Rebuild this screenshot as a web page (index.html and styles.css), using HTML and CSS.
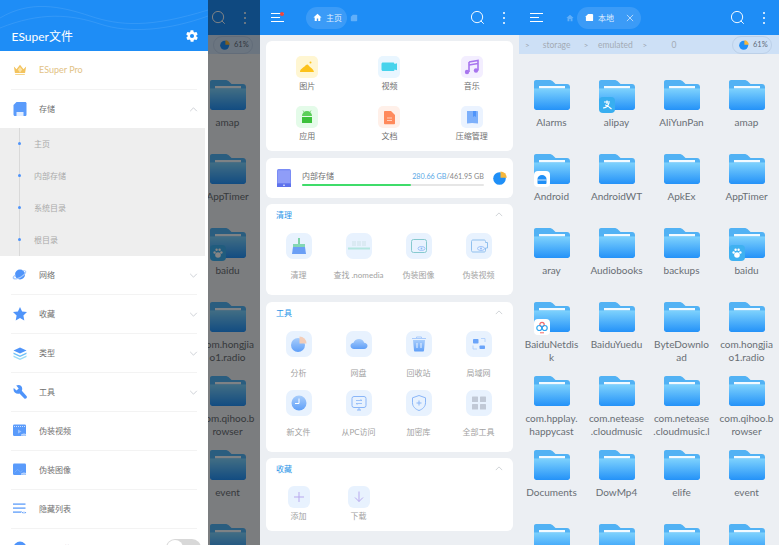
FILE: index.html
```html
<!DOCTYPE html>
<html lang="zh">
<head>
<meta charset="utf-8">
<title>ESuper文件</title>
<link rel="stylesheet" href="styles.css">
</head>
<body>
<svg class="defs" width="0" height="0" aria-hidden="true">
  <defs>
    <linearGradient id="fg" x1="0" y1="0" x2="0" y2="1"><stop offset="0" stop-color="#7ed2fd"/><stop offset="1" stop-color="#2492f8"/></linearGradient>
    <linearGradient id="tg" x1="0" y1="0" x2="0" y2="1"><stop offset="0" stop-color="#a8cdfb"/><stop offset="1" stop-color="#5f9ff8"/></linearGradient>
    <symbol id="folder" viewBox="0 0 36 30">
      <path d="M2 0h13c2 0 3 .6 4.500 2L21.500 4H33c1.700 0 3 1.300 3 3v8H0V2c0-1.100.9-2 2-2z" fill="#52b2f4"/>
      <rect x="5" y="6" width="26" height="2.500" fill="#f2faff"/>
      <path d="M0 8.500h36v19C36 28.900 34.900 30 33.500 30h-31C1.100 30 0 28.900 0 27.500z" fill="url(#fg)"/>
    </symbol>
    <symbol id="pie" viewBox="0 0 14 14">
      <circle cx="6.500" cy="7.500" r="6.300" fill="#1f8ff7"/>
      <path d="M7.500 0.500a6.300 6.300 0 0 1 6.300 6.300H7.500z" fill="#f6b73c"/>
    </symbol>
    <symbol id="search" viewBox="0 0 16 16">
      <circle cx="7.500" cy="7.500" r="6" fill="none" stroke="#fff" stroke-width="1"/>
      <path d="M11.800 11.800l2.600 2.600" stroke="#fff" stroke-width="1" stroke-linecap="round"/>
    </symbol>
    <symbol id="sd" viewBox="0 0 10 10">
      <path d="M3.500 1H8c.6 0 1 .4 1 1v6c0 .6-.4 1-1 1H2c-.6 0-1-.4-1-1V3.500z" fill="currentColor"/>
    </symbol>
    <symbol id="chev" viewBox="0 0 10 6"><path d="M1 5l4-4 4 4" fill="none" stroke="#bfc3c9" stroke-width=".9"/></symbol>
    <symbol id="chevd" viewBox="0 0 10 6"><path d="M1 1l4 4 4-4" fill="none" stroke="#bfc3c9" stroke-width=".9"/></symbol>
    <symbol id="eye" viewBox="0 0 8 5"><path d="M0 2.500C1.500.3 6.500.3 8 2.500 6.500 4.700 1.500 4.700 0 2.500z" fill="#fff"/><path d="M1 2.500C2.300 1 5.700 1 7 2.500 5.700 4 2.300 4 1 2.500z" fill="#4f94fa"/><circle cx="4" cy="2.500" r=".9" fill="#fff"/></symbol>
  </defs>
</svg>

<main class="screens">

  <!-- Screen 1: dimmed browser with open drawer -->
  <section class="screen">
    <header class="appbar">
      <span class="grow"></span>
      <svg class="ic-search"><use href="#search"/></svg>
      <span class="kebab"><i></i><i></i><i></i></span>
    </header>
    <div class="pathbar">
      <span class="grow"></span>
      <span class="usage"><svg class="usage-pie"><use href="#pie"/></svg>61%</span>
    </div>
    <div class="files files-last">
      <div class="file"><svg class="folder"><use href="#folder"/></svg><p>amap</p></div>
      <div class="file"><svg class="folder"><use href="#folder"/></svg><p>AppTimer</p></div>
      <div class="file"><svg class="folder"><use href="#folder"/></svg><span class="badge badge-baidu"><svg viewBox="0 0 16 16"><circle cx="8" cy="10" r="2.800" fill="#fff"/><circle cx="4.600" cy="7.500" r="1.200" fill="#fff"/><circle cx="11.400" cy="7.500" r="1.200" fill="#fff"/><circle cx="6.600" cy="4.800" r="1.200" fill="#fff"/><circle cx="9.600" cy="4.800" r="1.200" fill="#fff"/></svg></span><p>baidu</p></div>
      <div class="file"><svg class="folder"><use href="#folder"/></svg><p>com.hongjia<br>o1.radio</p></div>
      <div class="file"><svg class="folder"><use href="#folder"/></svg><p>com.qihoo.b<br>rowser</p></div>
      <div class="file"><svg class="folder"><use href="#folder"/></svg><p>event</p></div>
      <div class="file"><svg class="folder"><use href="#folder"/></svg></div>
    </div>
    <div class="scrim"></div>
    <aside class="drawer">
      <div class="drawer-head">
        <svg class="waves" viewBox="0 0 208 51" preserveAspectRatio="none"><path d="M0 18C30 0 60 6 90 16s60 12 118-6M0 28C40 12 70 14 100 24s70 6 108-8" fill="none" stroke="#fff" stroke-opacity=".14" stroke-width=".7"/></svg>
        <span class="drawer-title">ESuper文件</span>
        <svg class="gear" viewBox="0 0 24 24"><path fill="#fff" d="M19.400 13a7.500 7.500 0 0 0 0-2l2.100-1.600a.5.500 0 0 0 .1-.6l-2-3.500a.5.500 0 0 0-.6-.2l-2.500 1a7.300 7.300 0 0 0-1.700-1l-.4-2.700a.5.500 0 0 0-.5-.4h-4a.5.500 0 0 0-.5.400l-.4 2.700a7.300 7.300 0 0 0-1.700 1l-2.500-1a.5.500 0 0 0-.6.200l-2 3.500a.5.500 0 0 0 .1.600L4.600 11a7.500 7.500 0 0 0 0 2l-2.100 1.600a.5.500 0 0 0-.1.600l2 3.500c.1.200.4.300.6.200l2.500-1c.5.400 1.100.7 1.700 1l.4 2.700c0 .2.200.4.500.4h4c.3 0 .5-.2.500-.4l.4-2.700c.6-.3 1.200-.6 1.700-1l2.500 1c.2.100.5 0 .6-.2l2-3.500a.5.500 0 0 0-.1-.6zM12 15.500a3.500 3.500 0 1 1 0-7 3.500 3.500 0 0 1 0 7z"/></svg>
      </div>
      <div class="row row-pro">
        <svg class="row-ic" viewBox="0 0 16 14"><path d="M1 3l3 3 4-5 4 5 3-3-1.200 7.500H2.200z" fill="#f3c35e"/><path d="M8 3.500l2.500 3L8 10 5.500 6.500z" fill="#fbe3a8"/><rect x="2.500" y="11.500" width="11" height="1.200" fill="#f6d68c"/></svg>
        <span class="pro-label">ESuper Pro</span>
      </div>
      <div class="row">
        <svg class="row-ic" viewBox="0 0 14 14"><path d="M3.500 0H12c1 0 1.500.6 1.500 1.500v11c0 1-.6 1.500-1.500 1.500H2c-1 0-1.500-.6-1.500-1.500V3z" fill="#5a9bfb"/><rect x="3.500" y="10" width="7" height="4" fill="#e3eeff"/></svg>
        <span>存储</span><svg class="row-chev"><use href="#chev"/></svg>
      </div>
      <ul class="tree">
        <li>主页</li>
        <li>内部存储</li>
        <li>系统目录</li>
        <li>根目录</li>
      </ul>
      <div class="row">
        <svg class="row-ic row-ic-wide" viewBox="0 0 16 14"><circle cx="8" cy="6.500" r="5" fill="#4f94fa"/><path d="M.8 10.500c-.8-1.400 1-3 2.700-4.200.1.400.1.700.3 1-1.200.9-1.900 1.800-1.600 2.400.6 1 3.500.4 6.500-1.300s5-3.800 4.400-4.800c-.3-.5-1-.6-2-.4-.3-.2-.6-.5-1-.7 1.900-.5 3.400-.4 4 .6.900 1.600-1.500 4.500-5.300 6.700S1.700 12.100.8 10.500z" fill="#a9cbfc"/></svg>
        <span>网络</span><svg class="row-chev"><use href="#chevd"/></svg>
      </div>
      <div class="row">
        <svg class="row-ic" viewBox="0 0 14 14"><path d="M7 0l2.100 4.500 4.900.6-3.600 3.400.9 5L7 11.100 2.700 13.500l.9-5L0 5.100l4.900-.6z" fill="#4f94fa"/></svg>
        <span>收藏</span><svg class="row-chev"><use href="#chevd"/></svg>
      </div>
      <div class="row">
        <svg class="row-ic" viewBox="0 0 14 14"><path d="M7 1.500l6.500 3L7 7.500l-6.500-3z" fill="#4f94fa"/><path d="M.5 6.500L7 9.500l6.500-3V8L7 11 .5 8z" fill="#6fc0f7"/><path d="M.5 9.500L7 12.500l6.500-3V11L7 14 .5 11z" fill="#9bdcf6"/></svg>
        <span>类型</span><svg class="row-chev"><use href="#chevd"/></svg>
      </div>
      <div class="row">
        <svg class="row-ic" viewBox="0 0 14 14"><path d="M5.500 0C7.800 0 9.500 1.800 9.200 4.300c0 .7-.2 1.100-.4 1.500l4.700 5.200c.6.700.5 1.700-.1 2.300-.7.600-1.700.6-2.300-.1L6.500 8.500C3.500 9.300.5 7.500.5 4.500c0-.6.100-1 .3-1.500l2.700 2.600 2.200-2.200L3.200.6C3.900.2 4.700 0 5.500 0z" fill="#4f94fa"/></svg>
        <span>工具</span><svg class="row-chev"><use href="#chevd"/></svg>
      </div>
      <div class="row">
        <svg class="row-ic" viewBox="0 0 14 13"><rect y="0" width="13" height="11.500" rx="1.200" fill="#5a9bfb"/><path d="M1 2h1M3 2h1M5 2h1M7 2h1M9 2h1M11 2h1" stroke="#fff" stroke-width=".7"/><path d="M5 5l3.500 2L5 9z" fill="#9cc2fc"/><use href="#eye" x="8" y="8.500" width="6" height="4"/></svg>
        <span>伪装视频</span>
      </div>
      <div class="row">
        <svg class="row-ic" viewBox="0 0 14 13"><rect y="0" width="13" height="11.500" rx="1.200" fill="#5a9bfb"/><path d="M1.500 9l3-3 3 2.500 2-1.500" fill="none" stroke="#81b2fb" stroke-width=".7"/><use href="#eye" x="8" y="8.500" width="6" height="4"/></svg>
        <span>伪装图像</span>
      </div>
      <div class="row">
        <svg class="row-ic" viewBox="0 0 14 13"><rect y="1" width="12.500" height="1.200" fill="#4f94fa"/><rect y="5" width="12.500" height="1.200" fill="#4f94fa"/><rect y="9" width="9" height="1.200" fill="#4f94fa"/><use href="#eye" x="8" y="8" width="6" height="4"/></svg>
        <span>隐藏列表</span>
      </div>
      <div class="row row-last">
        <svg class="row-ic" viewBox="0 0 14 14"><circle cx="7" cy="7" r="6.500" fill="#4f94fa"/></svg>
        <span class="last-label">显示隐藏路径</span>
        <span class="toggle"><i></i></span>
      </div>
    </aside>
  </section>

  <!-- Screen 2: home -->
  <section class="screen screen-home">
    <header class="appbar">
      <span class="burger burger-dot"><i></i><i></i><i></i></span>
      <span class="tab tab-home">
        <svg class="tab-ic" viewBox="0 0 10 10"><path d="M5 .8L.5 5h1.400v4h2.300V6.200h1.600V9h2.300V5h1.400z" fill="#fff"/></svg>主页
      </span>
      <svg class="crumb-ic crumb-sd"><use href="#sd"/></svg>
      <span class="grow"></span>
      <svg class="ic-search"><use href="#search"/></svg>
      <span class="kebab"><i></i><i></i><i></i></span>
    </header>
    <div class="home">
      <div class="card cats">
        <div class="cat"><span class="cat-ic bg-yellow"><svg viewBox="0 0 22 22"><path d="M4 16c0-3 3-4 5-6 2-2 3-2 4 0 1.500 1.500 4.500 3 5 6z" fill="#fcc21b"/><circle cx="14.500" cy="6.500" r="1" fill="#fcc21b"/></svg></span>图片</div>
        <div class="cat"><span class="cat-ic bg-blue"><svg viewBox="0 0 22 22"><path d="M5 6.500h10c1 0 1.500.6 1.500 1.500l2.500-.7v7l-2.500-.8c0 1-.5 1.500-1.500 1.500H5c-1 0-1.500-.6-1.500-1.500V8C3.500 7.100 4 6.500 5 6.500z" fill="#47d3ec"/></svg></span>视频</div>
        <div class="cat"><span class="cat-ic bg-purple"><svg viewBox="0 0 22 22"><path d="M8 6l9-1.500v10" fill="none" stroke="#a875ee" stroke-width="1.600"/><path d="M8 6v10" stroke="#a875ee" stroke-width="1.600"/><path d="M8 9l9-1.500" stroke="#a875ee" stroke-width="1.600"/><circle cx="6" cy="16" r="2.200" fill="#a875ee"/><circle cx="15" cy="14.500" r="2.200" fill="#a875ee"/></svg></span>音乐</div>
        <div class="cat"><span class="cat-ic bg-green"><svg viewBox="0 0 22 22"><path d="M6 10a5 5 0 0 1 10 0z" fill="#5ccf5a"/><path d="M6 11h10v6H6z" fill="#3cc13b"/><path d="M8 6L7 4.500M14 6l1-1.500" stroke="#5ccf5a" stroke-width=".7"/></svg></span>应用</div>
        <div class="cat"><span class="cat-ic bg-orange"><svg viewBox="0 0 22 22"><path d="M7 5h6l4 4v8.500c0 .5-.4.800-.8.800H6.800c-.4 0-.8-.3-.8-.8V6c0-.5.4-1 1-1z" fill="#ff8a5c"/><path d="M9 12h5M9 14.500h5" stroke="#ffe3d6" stroke-width=".8"/></svg></span>文档</div>
        <div class="cat"><span class="cat-ic bg-sky"><svg viewBox="0 0 22 22"><path d="M6 5h10c.6 0 1 .4 1 1v11.500l-6-.5-5 .5z" fill="#7db0fb"/><path d="M12 5h3v6l-1.500-1-1.500 1z" fill="#4f94fa"/></svg></span>压缩管理</div>
      </div>
      <div class="card storage">
        <svg class="storage-ic" viewBox="0 0 14 18"><rect width="14" height="18" rx="1.500" fill="#7a8cf5"/><rect x="1" y="1.500" width="12" height="12.500" fill="#8f9df8"/><rect y="14.500" width="14" height="3.500" fill="#5e72ec"/><circle cx="7" cy="16.200" r=".8" fill="#fff"/></svg>
        <div class="storage-main">
          <div class="storage-text"><span>内部存储</span><span class="storage-size"><b>280.66 GB</b>/461.95 GB</span></div>
          <div class="bar"><div class="bar-fill"></div></div>
        </div>
        <svg class="storage-pie"><use href="#pie"/></svg>
      </div>
      <div class="card section">
        <div class="section-head"><span>清理</span><svg class="section-chev"><use href="#chev"/></svg></div>
        <div class="tools">
          <div class="tool"><span class="tool-ic"><svg viewBox="0 0 26 26"><path d="M12 5h2v6h-2z" fill="#7ed3a8"/><path d="M7 11h12v3H7z" fill="#83d7b5"/><path d="M7 14h12l1 7H6z" fill="#6b9ff5"/></svg></span>清理</div>
          <div class="tool"><span class="tool-ic"><svg viewBox="0 0 26 26"><rect x="6" y="8" width="4" height="5" fill="#dbeaf3"/><rect x="11" y="8" width="4" height="5" fill="#dbeaf3"/><rect x="16" y="8" width="4" height="5" fill="#dbeaf3"/><rect x="2" y="14.500" width="22" height="2" fill="#b4e6e0"/></svg></span>查找 .nomedia</div>
          <div class="tool"><span class="tool-ic"><svg viewBox="0 0 26 26"><rect x="5.500" y="6.500" width="15" height="13" rx="2" fill="none" stroke="#86c9cf" stroke-width="1"/><ellipse cx="15.500" cy="15.500" rx="3.500" ry="2" fill="none" stroke="#8db8f6" stroke-width=".8"/><circle cx="15.500" cy="15.500" r=".9" fill="#8db8f6"/></svg></span>伪装图像</div>
          <div class="tool"><span class="tool-ic"><svg viewBox="0 0 26 26"><path d="M7 7h11c1 0 1.500.6 1.500 1.500v1h2V15h-2v2.500c0 1-.5 1.500-1.500 1.500H7c-1 0-1.500-.5-1.500-1.500v-9C5.500 7.600 6 7 7 7z" fill="none" stroke="#90c0ee" stroke-width="1"/><ellipse cx="15" cy="15.500" rx="3.500" ry="2" fill="none" stroke="#8db8f6" stroke-width=".8"/><circle cx="15" cy="15.500" r=".9" fill="#8db8f6"/></svg></span>伪装视频</div>
        </div>
      </div>
      <div class="card section">
        <div class="section-head"><span>工具</span><svg class="section-chev"><use href="#chev"/></svg></div>
        <div class="tools">
          <div class="tool"><span class="tool-ic"><svg viewBox="0 0 26 26"><circle cx="12" cy="14" r="7" fill="url(#tg)"/><path d="M13.500 5.500a7 7 0 0 1 7 7h-7z" fill="#f3cdb8"/></svg></span>分析</div>
          <div class="tool"><span class="tool-ic"><svg viewBox="0 0 26 26"><path d="M8 18c-2 0-3.500-1.400-3.500-3.200S5.800 11.700 7.500 11.700C8.200 9.500 10.400 8 13 8s4.500 1.500 5.200 3.700c1.800 0 3.300 1.300 3.300 3.100S20 18 18 18z" fill="url(#tg)"/></svg></span>网盘</div>
          <div class="tool"><span class="tool-ic"><svg viewBox="0 0 26 26"><path d="M7 9h12l-1 10.500c0 .5-.5 1-1 1H9c-.5 0-1-.5-1-1z" fill="url(#tg)"/><path d="M6 7.500h14M10.500 7.500V6h5v1.500" fill="none" stroke="#a9cbfc" stroke-width="1"/><path d="M11 12v5M15 12v5" stroke="#eaf3ff" stroke-width="1"/></svg></span>回收站</div>
          <div class="tool"><span class="tool-ic"><svg viewBox="0 0 26 26"><rect x="7" y="8" width="5.500" height="4.500" rx=".8" fill="#6aa4fa"/><rect x="13.500" y="14.500" width="5.500" height="3.500" rx=".8" fill="#6aa4fa"/><path d="M15 7.500h4V11M7 14.500V18h4" fill="none" stroke="#a9cbfc" stroke-width=".8"/></svg></span>局域网</div>
          <div class="tool"><span class="tool-ic"><svg viewBox="0 0 26 26"><circle cx="13" cy="13" r="7.500" fill="url(#tg)"/><path d="M13 8.500V13.500H9" fill="none" stroke="#fff" stroke-width="1"/></svg></span>新文件</div>
          <div class="tool"><span class="tool-ic"><svg viewBox="0 0 26 26"><rect x="6" y="6.500" width="14" height="11" rx="2" fill="none" stroke="#8ab6f8" stroke-width="1"/><path d="M10 10.500h6l-1.500-1M16 13.500h-6l1.500 1" fill="none" stroke="#8ab6f8" stroke-width=".8"/><path d="M11 20h4M13 17.500V20" stroke="#8ab6f8" stroke-width="1"/></svg></span>从PC访问</div>
          <div class="tool"><span class="tool-ic"><svg viewBox="0 0 26 26"><path d="M13 5.500l6.500 2.300v5c0 3.700-2.800 6.400-6.500 7.700-3.700-1.300-6.500-4-6.500-7.700v-5z" fill="none" stroke="#8ab6f8" stroke-width="1"/><path d="M13 10.500v5M10.500 13h5" stroke="#8ab6f8" stroke-width="1"/></svg></span>加密库</div>
          <div class="tool"><span class="tool-ic"><svg viewBox="0 0 26 26"><rect x="6" y="6.500" width="6" height="5.500" rx=".6" fill="#c1c9d6"/><rect x="14" y="6.500" width="6" height="5.500" rx=".6" fill="#c1c9d6"/><rect x="6" y="14" width="6" height="5.500" rx=".6" fill="#c1c9d6"/><rect x="14" y="14" width="6" height="5.500" rx=".6" fill="#c1c9d6"/></svg></span>全部工具</div>
        </div>
      </div>
      <div class="card section">
        <div class="section-head"><span>收藏</span><svg class="section-chev"><use href="#chev"/></svg></div>
        <div class="tools tools-fav">
          <div class="tool"><span class="tool-ic"><svg viewBox="0 0 22 22"><path d="M11 6v10M6 11h10" stroke="#b8a9ee" stroke-width="1"/></svg></span>添加</div>
          <div class="tool"><span class="tool-ic"><svg viewBox="0 0 22 22"><path d="M11 5.500v10M7 11.500l4 4 4-4" fill="none" stroke="#b8a9ee" stroke-width="1"/></svg></span>下载</div>
        </div>
      </div>
    </div>
  </section>

  <!-- Screen 3: local file browser -->
  <section class="screen">
    <header class="appbar">
      <span class="burger"><i></i><i></i><i></i></span>
      <svg class="crumb-ic crumb-home" viewBox="0 0 10 10"><path d="M5 .8L.5 5h1.400v4h2.300V6.200h1.600V9h2.300V5h1.400z" fill="currentColor"/></svg>
      <span class="tab tab-local">
        <svg class="tab-ic"><use href="#sd"/></svg>本地
        <svg class="tab-close" viewBox="0 0 9 9"><path d="M1 1l7 7M8 1L1 8" stroke="#fff" stroke-opacity=".85" stroke-width=".8"/></svg>
      </span>
      <span class="grow"></span>
      <svg class="ic-search"><use href="#search"/></svg>
      <span class="kebab"><i></i><i></i><i></i></span>
    </header>
    <div class="pathbar">
      <span class="seg">&gt;<em>storage</em></span>
      <span class="seg">&gt;<em>emulated</em></span>
      <span class="seg">&gt;<em>0</em></span>
      <span class="grow"></span>
      <span class="usage"><svg class="usage-pie"><use href="#pie"/></svg>61%</span>
    </div>
    <div class="files">
      <div class="file"><svg class="folder"><use href="#folder"/></svg><p>Alarms</p></div>
      <div class="file"><svg class="folder"><use href="#folder"/></svg><span class="badge badge-alipay"><svg viewBox="0 0 16 16"><path d="M5 5h6M8 3.500V7M4 11c3 0 5-2 6-5M6 8c2 0 4 2 6.500 4" fill="none" stroke="#fff" stroke-width="1.200"/></svg></span><p>alipay</p></div>
      <div class="file"><svg class="folder"><use href="#folder"/></svg><p>AliYunPan</p></div>
      <div class="file"><svg class="folder"><use href="#folder"/></svg><p>amap</p></div>
      <div class="file"><svg class="folder"><use href="#folder"/></svg><span class="badge badge-white"><svg viewBox="0 0 16 16"><path d="M3.500 8a4.500 4 0 0 1 9 0v4c0 .6-.4 1-1 1h-7c-.6 0-1-.4-1-1z" fill="#1f8ff7"/><path d="M3.500 9h9" stroke="#fff" stroke-width=".8"/></svg></span><p>Android</p></div>
      <div class="file"><svg class="folder"><use href="#folder"/></svg><p>AndroidWT</p></div>
      <div class="file"><svg class="folder"><use href="#folder"/></svg><p>ApkEx</p></div>
      <div class="file"><svg class="folder"><use href="#folder"/></svg><p>AppTimer</p></div>
      <div class="file"><svg class="folder"><use href="#folder"/></svg><p>aray</p></div>
      <div class="file"><svg class="folder"><use href="#folder"/></svg><p>Audiobooks</p></div>
      <div class="file"><svg class="folder"><use href="#folder"/></svg><p>backups</p></div>
      <div class="file"><svg class="folder"><use href="#folder"/></svg><span class="badge badge-baidu"><svg viewBox="0 0 16 16"><circle cx="8" cy="10" r="2.800" fill="#fff"/><circle cx="4.600" cy="7.500" r="1.200" fill="#fff"/><circle cx="11.400" cy="7.500" r="1.200" fill="#fff"/><circle cx="6.600" cy="4.800" r="1.200" fill="#fff"/><circle cx="9.600" cy="4.800" r="1.200" fill="#fff"/></svg></span><p>baidu</p></div>
      <div class="file"><svg class="folder"><use href="#folder"/></svg><span class="badge badge-white"><svg viewBox="0 0 16 16"><circle cx="8" cy="5.500" r="2.200" fill="none" stroke="#ef6a6a" stroke-width="1.200"/><circle cx="5.300" cy="9" r="2.500" fill="none" stroke="#2fa6f2" stroke-width="1.200"/><circle cx="10.700" cy="9" r="2.500" fill="none" stroke="#2fa6f2" stroke-width="1.200"/><path d="M6 13.800h4" stroke="#ef6a6a" stroke-width="1"/></svg></span><p>BaiduNetdis<br>k</p></div>
      <div class="file"><svg class="folder"><use href="#folder"/></svg><p>BaiduYuedu</p></div>
      <div class="file"><svg class="folder"><use href="#folder"/></svg><p>ByteDownlo<br>ad</p></div>
      <div class="file"><svg class="folder"><use href="#folder"/></svg><p>com.hongjia<br>o1.radio</p></div>
      <div class="file"><svg class="folder"><use href="#folder"/></svg><p>com.hpplay.<br>happycast</p></div>
      <div class="file"><svg class="folder"><use href="#folder"/></svg><p>com.netease<br>.cloudmusic</p></div>
      <div class="file"><svg class="folder"><use href="#folder"/></svg><p>com.netease<br>.cloudmusic.l</p></div>
      <div class="file"><svg class="folder"><use href="#folder"/></svg><p>com.qihoo.b<br>rowser</p></div>
      <div class="file"><svg class="folder"><use href="#folder"/></svg><p>Documents</p></div>
      <div class="file"><svg class="folder"><use href="#folder"/></svg><p>DowMp4</p></div>
      <div class="file"><svg class="folder"><use href="#folder"/></svg><p>elife</p></div>
      <div class="file"><svg class="folder"><use href="#folder"/></svg><p>event</p></div>
      <div class="file"><svg class="folder"><use href="#folder"/></svg></div>
      <div class="file"><svg class="folder"><use href="#folder"/></svg></div>
      <div class="file"><svg class="folder"><use href="#folder"/></svg></div>
      <div class="file"><svg class="folder"><use href="#folder"/></svg></div>
    </div>
  </section>
</main>
</body>
</html>
```

FILE: styles.css
```css
* { box-sizing: border-box; }
html, body { margin: 0; padding: 0; }
body {
  width: 779px;
  height: 545px;
  overflow: hidden;
  font-family: "Lato", "Noto Sans CJK SC", sans-serif;
  color: #555;
  background: #eceff3;
}
.defs { position: absolute; }
.screens { display: flex; height: 545px; }
.screen { position: relative; width: 260px; height: 545px; overflow: hidden; background: #eceff3; flex: none; }
.screen-home { width: 259px; }
.grow { flex: 1; }

/* app bar */
.appbar { display: flex; align-items: center; height: 35px; background: #1e8df6; color: #fff; padding-right: 14.500px; }
.ic-search { width: 15px; height: 15px; margin-right: 18px; }
.kebab { display: flex; flex-direction: column; gap: 3px; width: 2px; }
.kebab i { width: 2px; height: 2px; border-radius: 50%; background: #fff; }
.burger { position: relative; display: flex; flex-direction: column; gap: 3.300px; width: 13px; margin-left: 11px; }
.burger i { height: 1px; background: #fff; }
.burger i:nth-child(2) { width: 9px; }
.burger-dot::after { content: ""; position: absolute; left: 9px; top: -1px; width: 4px; height: 4px; border-radius: 50%; background: #f0453a; }
.tab { display: flex; align-items: center; height: 22px; border-radius: 11px; background: rgba(255,255,255,.13); font-size: 8px; color: rgba(255,255,255,.85); }
.tab-ic { width: 9px; height: 9px; color: #fff; }
.tab-home { margin-left: 22px; width: 41px; padding-left: 7px; gap: 4px; }
.crumb-ic { width: 8px; height: 8px; color: rgba(255,255,255,.3); }
.crumb-sd { margin-left: 3px; }
.crumb-home { margin-left: 23px; }
.tab-local { margin-left: 3px; width: 64px; padding-left: 8px; gap: 4px; }
.tab-close { width: 8px; height: 8px; margin-left: 8px; }

/* path bar */
.pathbar { display: flex; align-items: center; height: 19px; background: #cde0f6; padding: 0 7px 0 6px; font-size: 8px; color: #a3abb5; }
.seg { display: flex; align-items: center; width: 58.700px; font-size: 8px; color: #9ba4ae; }
.seg em { flex: 1; font-style: normal; font-size: 8.500px; text-align: center; color: #a3abb5; }
.usage { display: flex; align-items: center; height: 18px; width: 40px; padding-left: 6px; gap: 4px; border: 1px solid #bcd0e8; border-radius: 9px; color: #5f6b7a; font-size: 7.500px; }
.usage-pie { width: 10px; height: 10px; flex: none; }

/* file grid */
.files { display: grid; grid-template-columns: repeat(4, 65px); grid-auto-rows: 74px; padding-top: 26px; }
.files-last .file { grid-column: 4; }
.file { position: relative; display: flex; flex-direction: column; align-items: center; padding: 0 2px; }
.folder { width: 36px; height: 30px; flex: none; }
.file p {
  margin: 5.500px 0 0;
  width: 100%;
  font-size: 10px;
  line-height: 13px;
  color: #686e74;
  text-align: center;
  white-space: nowrap;
}
.badge { position: absolute; left: 14.500px; top: 17px; width: 16px; height: 16px; border-radius: 4px; }
.badge svg { display: block; width: 16px; height: 16px; }
.badge-alipay { background: #38aef0; }
.badge-baidu { background: #3fb1f1; }
.badge-white { background: #fff; }

/* scrim + drawer */
.scrim { position: absolute; inset: 0; background: rgba(0,0,0,.48); }
.drawer { position: absolute; left: 0; top: 0; bottom: 0; width: 208px; background: #fff; font-size: 8px; color: #6f6f6f; }
.drawer-head { position: relative; display: flex; align-items: flex-end; justify-content: space-between; height: 51px; padding: 0 9px 6px 11.500px; background: #1e8df6; }
.waves { position: absolute; inset: 0; width: 100%; height: 100%; }
.drawer-title { position: relative; font-size: 12px; line-height: 16px; color: #fff; }
.gear { position: relative; width: 14px; height: 14px; margin-bottom: 2px; }
.row { position: relative; display: flex; align-items: center; height: 39px; margin: 0 11px; padding-left: 1.500px; border-bottom: 1px solid #f3f3f3; }
.row-pro { height: 38.500px; }
.row-ic { width: 14px; height: 14px; margin-right: 12.500px; flex: none; }
.row-ic-wide { width: 16px; margin: 0 11.500px 0 -1px; }
.row-chev { position: absolute; right: -1px; top: 17px; width: 9px; height: 5px; }
.pro-label { font-size: 9px; color: #e2c285; }
.row-last { border-bottom: 0; }
.last-label { color: #999; }
.toggle { position: absolute; right: -4px; top: 10px; width: 35px; height: 18px; border-radius: 9px; background: #d8d8d8; }
.toggle i { position: absolute; left: 1px; top: 1px; width: 16px; height: 16px; border-radius: 50%; background: #fff; }
.tree { position: relative; margin: -1px 0 0; padding: 0; width: 205px; height: 128px; list-style: none; background: #eee; }
.tree::before { content: ""; position: absolute; left: 18.500px; top: 0; bottom: 0; width: 1px; background: #d9d9d9; }
.tree li { position: relative; height: 32px; padding-left: 34px; line-height: 32px; color: #aaa; }
.tree li::before { content: ""; position: absolute; left: 17.500px; top: 14.500px; width: 3px; height: 3px; border-radius: 50%; background: #4f94fa; }

/* home */
.home { display: flex; flex-direction: column; gap: 6.500px; padding: 6px 6px 0; font-size: 8px; }
.card { background: #fff; border-radius: 6px; }
.cats { display: grid; grid-template-columns: repeat(3, 82.300px); grid-auto-rows: 50px; height: 110px; padding: 15px 0 0; color: #707070; }
.cat { display: flex; flex-direction: column; align-items: center; gap: 3px; line-height: 10px; }
.cat-ic { display: block; width: 22px; height: 22px; border-radius: 5px; }
.cat-ic svg { display: block; width: 22px; height: 22px; }
.bg-yellow { background: #fff6d2; }
.bg-blue { background: #e9f6ff; }
.bg-purple { background: #f3eeff; }
.bg-green { background: #e4fbe9; }
.bg-orange { background: #fff0e9; }
.bg-sky { background: #ebf3ff; }

.storage { display: flex; align-items: center; height: 40px; padding: 0 6px 0 11px; }
.storage-ic { width: 14px; height: 18px; flex: none; }
.storage-main { flex: 1; margin: 0 9px 0 11px; padding-top: 2px; }
.storage-text { display: flex; justify-content: space-between; line-height: 11px; color: #707070; }
.storage-size { font-size: 7.200px; color: #888; }
.storage-size b { font-weight: 400; color: #5ba8e6; }
.bar { height: 2.500px; margin-top: 2px; background: #e6e6e6; border-radius: 1px; }
.bar-fill { width: 60%; height: 100%; background: #3fdc6a; border-radius: 1px; }
.storage-pie { width: 14px; height: 14px; flex: none; }

.section { padding-bottom: 3px; }
.section-head { display: flex; align-items: center; justify-content: space-between; height: 22px; padding: 0 10px 1px; font-size: 8px; color: #2b95e8; }
.section-chev { width: 8px; height: 5px; }
.tools { display: grid; grid-template-columns: repeat(4, 60px); padding: 7px 2.500px 0; color: #a2a2a2; }
.tool { display: flex; flex-direction: column; align-items: center; gap: 11px; height: 59px; line-height: 10px; white-space: nowrap; }
.tool-ic { display: block; width: 26px; height: 26px; border-radius: 7px; background: #e8f2fe; }
.tool-ic svg { display: block; width: 100%; height: 100%; }
.tools-fav { padding-top: 6px; }
.tools-fav .tool { height: 42px; gap: 3px; }
.tools-fav .tool-ic { width: 22px; height: 22px; border-radius: 6px; }
```
